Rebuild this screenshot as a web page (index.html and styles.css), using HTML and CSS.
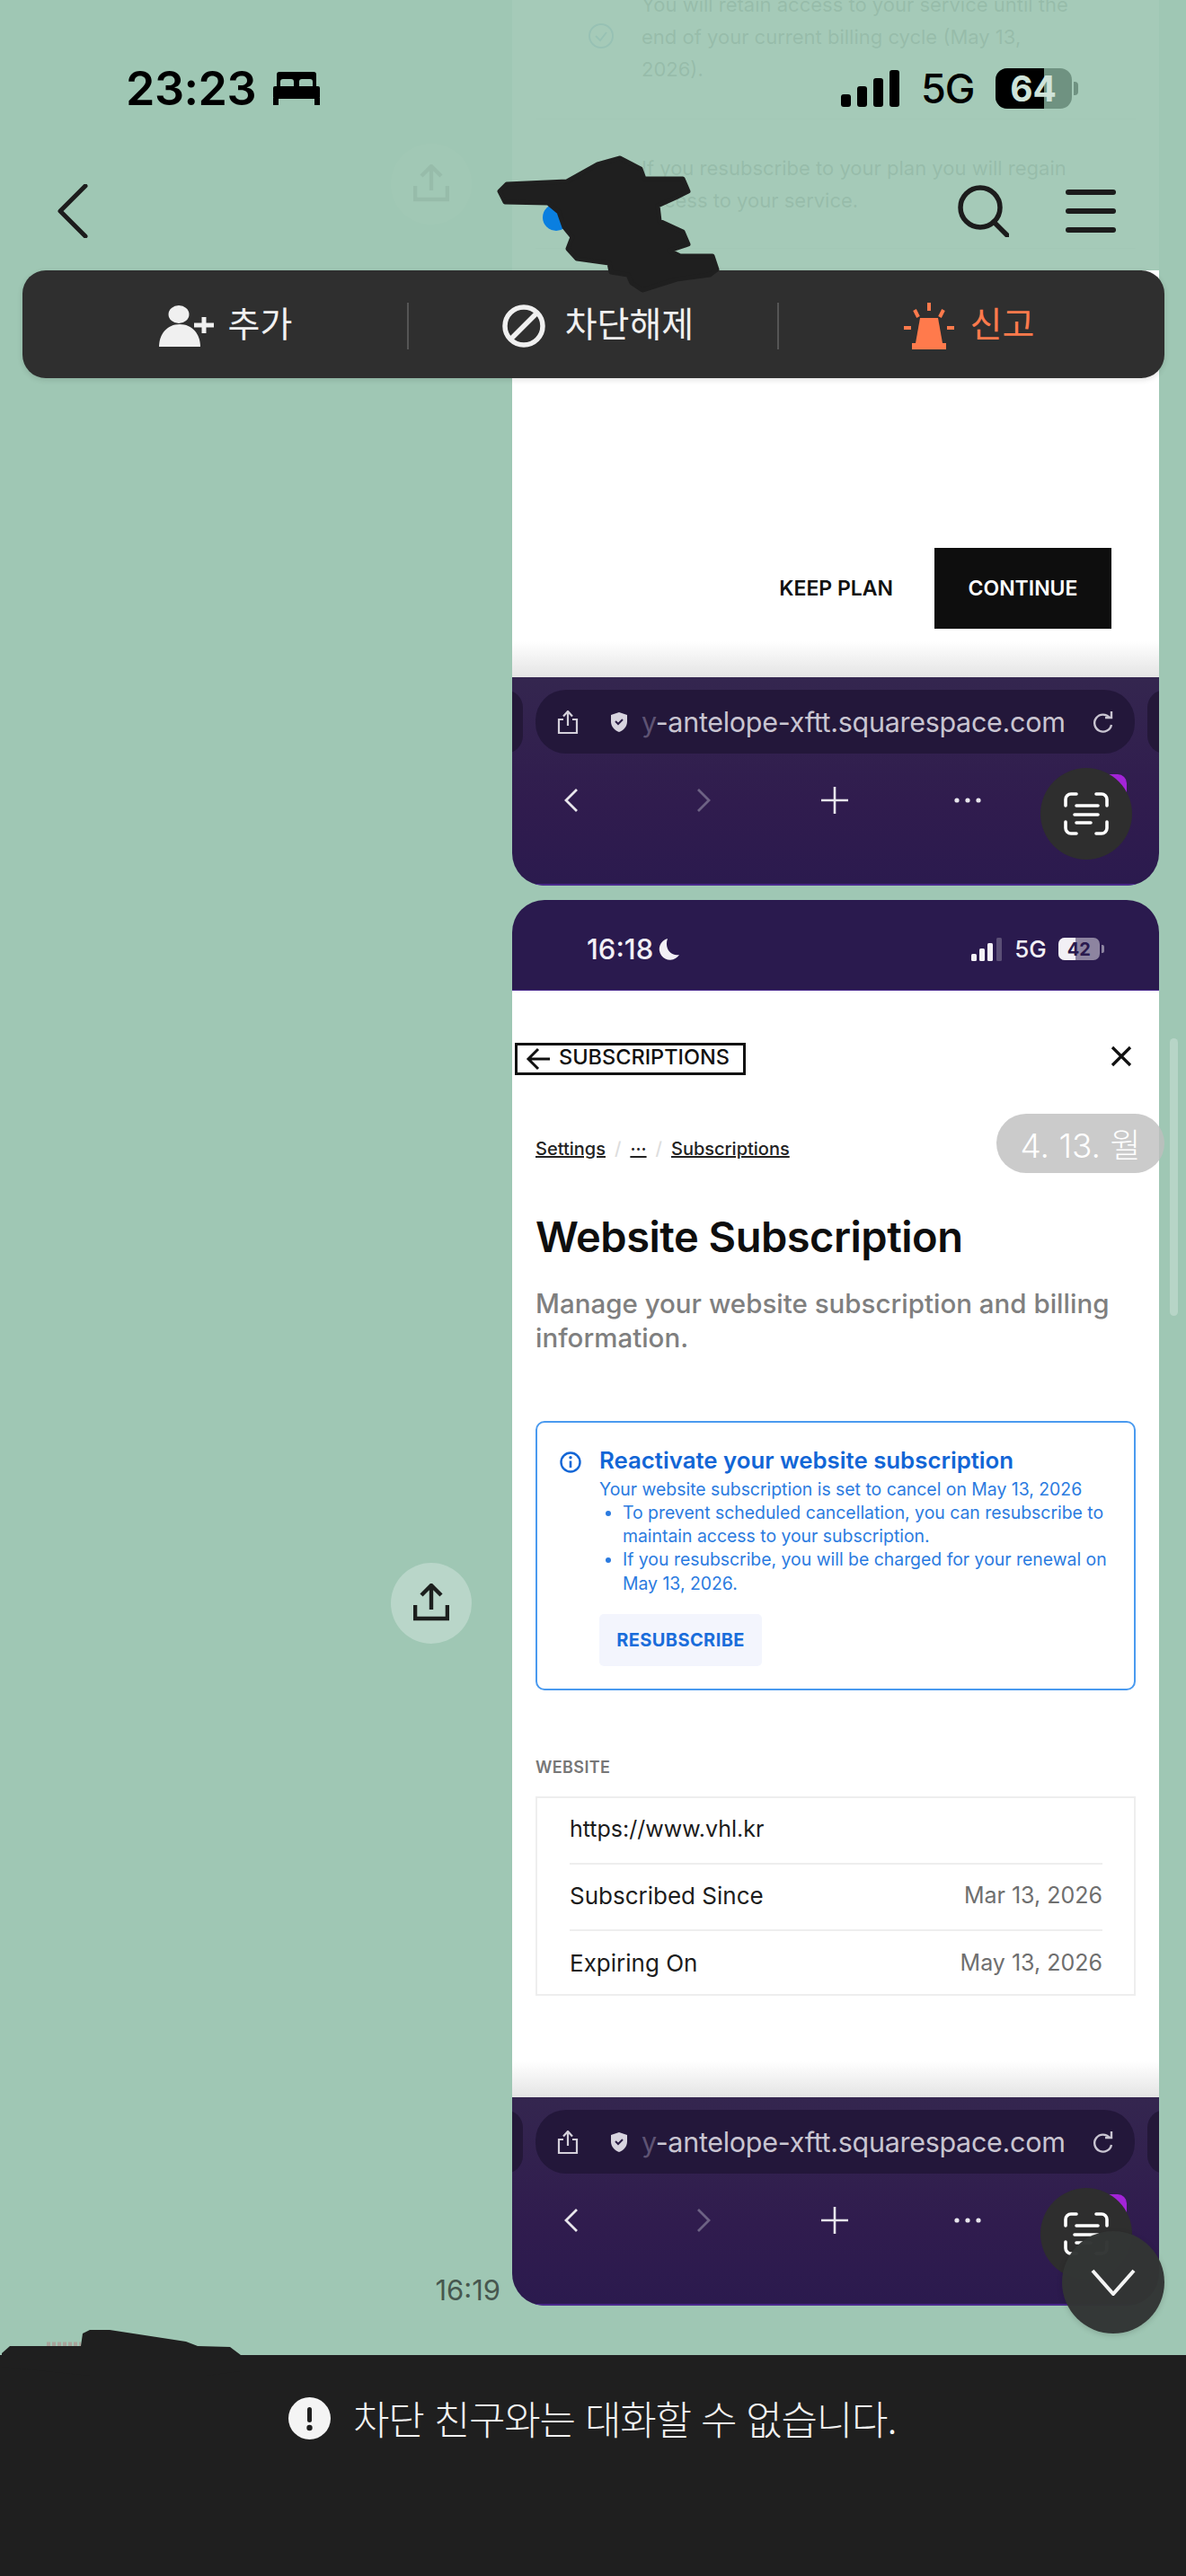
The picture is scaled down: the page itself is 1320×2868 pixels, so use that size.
FILE: index.html
```html
<!DOCTYPE html>
<html lang="ko">
<head>
    <meta charset="UTF-8">
    <meta name="viewport" content="width=device-width, initial-scale=1.0">
    <title>Chat</title>
    <link rel="stylesheet" href="styles.css">
</head>
<body>
    <!-- shared toolbar icons -->
    <svg class="icon-defs" aria-hidden="true">
        <symbol id="i-up" viewBox="0 0 24 26"><path d="M12 17V2M7 6.5L12 1l5 5.5M7 10H2v15h20V10h-5" fill="none" stroke="#d4d0da" stroke-width="2.2"/></symbol>
        <symbol id="i-shield" viewBox="0 0 20 22"><path d="M10 0l9 3v7c0 6-4 10-9 12C5 20 1 16 1 10V3z" fill="#d8d4df"/><path d="M6 10l3 3 5-5" fill="none" stroke="#2a1c44" stroke-width="2"/></symbol>
        <symbol id="i-reload" viewBox="0 0 24 26"><path d="M20 8a9.5 9.5 0 1 0 2 8" fill="none" stroke="#c9c5d1" stroke-width="2.4"/><path d="M15 8h7V1" fill="none" stroke="#c9c5d1" stroke-width="2.4"/></symbol>
        <symbol id="i-scan" viewBox="0 0 50 48"><path d="M2 15V8a6 6 0 0 1 6-6h6M36 2h6a6 6 0 0 1 6 6v7M2 33v7a6 6 0 0 0 6 6h6M36 46h6a6 6 0 0 0 6-6v-7M14 15h24M12 25h26M14 34h16" fill="none" stroke="#fff" stroke-width="3.6" stroke-linecap="round"/></symbol>
        <symbol id="i-share" viewBox="0 0 40 44"><path d="M20 29V4M9 13L20 2l11 11" fill="none" stroke="#1c1f1d" stroke-width="4.4"/><path d="M2 24v15h36V24" fill="none" stroke="#1c1f1d" stroke-width="4.6"/></symbol>
    </svg>

    <!-- transcript -->
    <main class="chat">
        <div class="transcript">
            <div class="msg">
                <div class="msg-side">
                    <button class="share-btn"><svg width="40" height="44"><use href="#i-share"/></svg></button>
                </div>
                <div class="shot">
                    <div class="page page-plan">
                        <div class="plan-note">
                            <svg class="plan-check" width="28" height="30" viewBox="0 0 28 30"><circle cx="14" cy="15" r="13" fill="none" stroke="#1b6fb0" stroke-width="2"/><path d="M8 15l5 5 7-9" fill="none" stroke="#1b6fb0" stroke-width="2"/></svg>
                            <p>You will retain access to your service until the end of your current billing cycle (May 13, 2026).</p>
                        </div>
                        <div class="plan-note plan-note-b">
                            <p>If you resubscribe to your plan you will regain access to your service.</p>
                        </div>
                        <div class="plan-actions">
                            <span class="keep-plan">KEEP PLAN</span>
                            <span class="continue">CONTINUE</span>
                        </div>
                    </div>
                    <div class="browser-bar">
                        <span class="tab-peek tab-peek-l"></span>
                        <span class="tab-peek tab-peek-r"></span>
                        <div class="url-pill">
                            <svg class="url-up" width="24" height="26"><use href="#i-up"/></svg>
                            <svg class="url-shield" width="20" height="22"><use href="#i-shield"/></svg>
                            <span class="url-text"><span class="url-fade">y</span>-antelope-xftt.squarespace.com</span>
                            <svg class="url-reload" width="24" height="26"><use href="#i-reload"/></svg>
                        </div>
                        <div class="browser-nav">
                            <svg width="24" height="34" viewBox="0 0 24 34"><path d="M19 5L7 17l12 12" fill="none" stroke="#e8e6ec" stroke-width="2.8"/></svg>
                            <svg class="nav-off" width="24" height="34" viewBox="0 0 24 34"><path d="M5 5l12 12L5 29" fill="none" stroke="#6d6284" stroke-width="2.8"/></svg>
                            <svg width="30" height="30" viewBox="0 0 30 30"><path d="M15 0v30M0 15h30" stroke="#e8e6ec" stroke-width="2.6"/></svg>
                            <svg width="30" height="6" viewBox="0 0 30 6"><circle cx="3" cy="3" r="2.6" fill="#e8e6ec"/><circle cx="15" cy="3" r="2.6" fill="#e8e6ec"/><circle cx="27" cy="3" r="2.6" fill="#e8e6ec"/></svg>
                        </div>
                        <span class="tab-badge"></span>
                        <button class="scan-btn"><svg width="50" height="48"><use href="#i-scan"/></svg></button>
                    </div>
                </div>
            </div>

            <div class="msg">
                <div class="msg-side">
                    <button class="share-btn"><svg width="40" height="44"><use href="#i-share"/></svg></button>
                    <span class="msg-time">16:19</span>
                </div>
                <div class="shot">
                    <div class="shot-status">
                        <span class="shot-clock">16:18</span>
                        <svg class="shot-moon" width="24" height="26" viewBox="0 0 24 26"><path d="M10 1a12 12 0 1 0 13 18C14 21 6 12 10 1z" fill="#f2f0f5"/></svg>
                        <svg class="shot-signal" width="34" height="26" viewBox="0 0 34 26"><rect x="0" y="18" width="6" height="8" rx="1.5" fill="#f2f0f5"/><rect x="9" y="12" width="6" height="14" rx="1.5" fill="#f2f0f5"/><rect x="18" y="6" width="6" height="20" rx="1.5" fill="#f2f0f5"/><rect x="28" y="0" width="6" height="26" rx="1.5" fill="#5b4f76"/></svg>
                        <span class="shot-net">5G</span>
                        <span class="shot-batt"><span class="shot-batt-fill"></span><b>42</b></span>
                        <span class="shot-nub"></span>
                    </div>
                    <div class="page page-sub">
                        <div class="sub-top">
                            <span class="sub-back">
                                <svg width="28" height="26" viewBox="0 0 28 26"><path d="M27 13H3M14 2L3 13l11 11" fill="none" stroke="#111" stroke-width="3"/></svg>
                                <span class="sub-back-text">SUBSCRIPTIONS</span>
                            </span>
                            <svg class="sub-close" width="24" height="24" viewBox="0 0 24 24"><path d="M2 2l20 20M22 2L2 22" stroke="#111" stroke-width="3.2"/></svg>
                        </div>
                        <div class="crumbs">
                            <a>Settings</a><i>/</i><a>···</a><i>/</i><a>Subscriptions</a>
                        </div>
                        <h1 class="sub-title">Website Subscription</h1>
                        <p class="sub-lead">Manage your website subscription and billing information.</p>

                        <div class="notice">
                            <svg class="notice-icon" width="24" height="24" viewBox="0 0 24 24"><circle cx="12" cy="12" r="10.5" fill="none" stroke="#1266d6" stroke-width="2.4"/><path d="M12 10.5V18" stroke="#1266d6" stroke-width="2.6"/><circle cx="12" cy="6.8" r="1.7" fill="#1266d6"/></svg>
                            <div class="notice-body">
                                <h2>Reactivate your website subscription</h2>
                                <p>Your website subscription is set to cancel on May 13, 2026</p>
                                <ul>
                                    <li>To prevent scheduled cancellation, you can resubscribe to maintain access to your subscription.</li>
                                    <li>If you resubscribe, you will be charged for your renewal on May 13, 2026.</li>
                                </ul>
                                <span class="resub">RESUBSCRIBE</span>
                            </div>
                        </div>

                        <div class="section-label">WEBSITE</div>
                        <div class="site-table">
                            <div class="site-row"><span class="site-url">https://www.vhl.kr</span></div>
                            <div class="site-row"><span>Subscribed Since</span><em>Mar 13, 2026</em></div>
                            <div class="site-row"><span>Expiring On</span><em>May 13, 2026</em></div>
                        </div>
                    </div>
                    <div class="browser-bar">
                        <span class="tab-peek tab-peek-l"></span>
                        <span class="tab-peek tab-peek-r"></span>
                        <div class="url-pill">
                            <svg class="url-up" width="24" height="26"><use href="#i-up"/></svg>
                            <svg class="url-shield" width="20" height="22"><use href="#i-shield"/></svg>
                            <span class="url-text"><span class="url-fade">y</span>-antelope-xftt.squarespace.com</span>
                            <svg class="url-reload" width="24" height="26"><use href="#i-reload"/></svg>
                        </div>
                        <div class="browser-nav">
                            <svg width="24" height="34" viewBox="0 0 24 34"><path d="M19 5L7 17l12 12" fill="none" stroke="#e8e6ec" stroke-width="2.8"/></svg>
                            <svg class="nav-off" width="24" height="34" viewBox="0 0 24 34"><path d="M5 5l12 12L5 29" fill="none" stroke="#6d6284" stroke-width="2.8"/></svg>
                            <svg width="30" height="30" viewBox="0 0 30 30"><path d="M15 0v30M0 15h30" stroke="#e8e6ec" stroke-width="2.6"/></svg>
                            <svg width="30" height="6" viewBox="0 0 30 6"><circle cx="3" cy="3" r="2.6" fill="#e8e6ec"/><circle cx="15" cy="3" r="2.6" fill="#e8e6ec"/><circle cx="27" cy="3" r="2.6" fill="#e8e6ec"/></svg>
                        </div>
                        <span class="tab-badge"></span>
                        <button class="scan-btn"><svg width="50" height="48"><use href="#i-scan"/></svg></button>
                    </div>
                </div>
            </div>
        </div>

        <!-- floating bits over the transcript -->
        <span class="date-pill">4. 13. 월</span>
        <span class="scroll-thumb"></span>
        <button class="down-btn">
            <svg width="50" height="30" viewBox="0 0 50 30"><path d="M2 2l23 26L48 2" fill="none" stroke="#f4f4f4" stroke-width="4"/></svg>
        </button>
    </main>

    <!-- blocked friend footer -->
    <footer class="blocked">
        <svg width="47" height="47" viewBox="0 0 47 47"><circle cx="23.5" cy="23.5" r="23.5" fill="#f4f4f4"/><rect x="21" y="11" width="5" height="17" rx="2.5" fill="#1f1f1f"/><circle cx="23.5" cy="34" r="3.2" fill="#1f1f1f"/></svg>
        <span>차단 친구와는 대화할 수 없습니다.</span>
    </footer>

    <!-- header over the transcript -->
    <header class="top">
        <div class="top-head">
            <div class="status">
                <span class="status-time">23:23</span>
                <svg class="status-bed" width="52" height="37" viewBox="0 0 52 37"><path d="M4 3a3 3 0 0 1 3-3h38a3 3 0 0 1 3 3v13h-4v-5a3 3 0 0 0-3-3H32a3 3 0 0 0-3 3v5h-6v-5a3 3 0 0 0-3-3H11a3 3 0 0 0-3 3v5H4z" fill="#000"/><rect x="0" y="16" width="52" height="14" rx="2" fill="#000"/><rect x="0" y="29" width="6" height="8" fill="#000"/><rect x="46" y="29" width="6" height="8" fill="#000"/></svg>
                <svg class="status-signal" width="65" height="41" viewBox="0 0 65 41"><rect x="0" y="27" width="11" height="14" rx="3" fill="#000"/><rect x="18" y="18" width="11" height="23" rx="3" fill="#000"/><rect x="36" y="9" width="11" height="32" rx="3" fill="#000"/><rect x="54" y="0" width="11" height="41" rx="3" fill="#000"/></svg>
                <span class="status-net">5G</span>
                <span class="status-batt"><span class="status-batt-fill"></span><b>64</b></span>
                <span class="status-nub"></span>
            </div>
            <nav class="nav">
                <svg class="nav-back" width="34" height="60" viewBox="0 0 34 60"><path d="M31 2L3 30l28 28" fill="none" stroke="#1c1c1c" stroke-width="5" stroke-linecap="round" stroke-linejoin="round"/></svg>
                <svg class="nav-search" width="58" height="58" viewBox="0 0 58 58"><circle cx="26" cy="25" r="22" fill="none" stroke="#1c1c1c" stroke-width="5.5"/><path d="M41 41l15 15" stroke="#1c1c1c" stroke-width="5.5" stroke-linecap="round"/></svg>
                <div class="nav-menu"><span></span><span></span><span></span></div>
            </nav>
        </div>
        <div class="action-bar">
            <div class="action action-add">
                <svg width="62" height="46" viewBox="0 0 62 46"><ellipse cx="22" cy="10" rx="11.5" ry="10" fill="#f0f0f0"/><path d="M0 46C0 32 9 21 23 21s23 11 23 25z" fill="#f0f0f0"/><path d="M50 13v18M39 22h22" stroke="#f0f0f0" stroke-width="5"/></svg>
                <span>추가</span>
            </div>
            <div class="action action-unblock">
                <svg width="48" height="48" viewBox="0 0 48 48"><circle cx="24" cy="24" r="21" fill="none" stroke="#f0f0f0" stroke-width="5.5"/><path d="M38 10L10 38" stroke="#f0f0f0" stroke-width="5.5"/></svg>
                <span>차단해제</span>
            </div>
            <div class="action action-report">
                <svg width="56" height="52" viewBox="0 0 56 52"><path d="M18 17h20l5 28H13z" fill="#ff7a4c"/><rect x="9" y="45" width="38" height="7" fill="#ff7a4c"/><path d="M28 0v9M12 8l4 8M44 8l-4 8M0 28h8M48 28h8" stroke="#ff7a4c" stroke-width="4"/></svg>
                <span>신고</span>
            </div>
        </div>
    </header>

    <!-- scribbled out names -->
    <svg class="scribble scribble-top" width="300" height="170" viewBox="540 165 300 170">
        <circle cx="619" cy="242" r="15" fill="#0a7fe0"/>
        <path d="M631 202L665 183 690 176 713 188 717 199 760 199 766 213 752 220 732 229 734 246 760 258 766 272 745 279 757 285 793 285 798 300 790 306 753 311 715 323 703 315 699 306 680 303 678 293 642 288 632 277 637 264 628 253 622 236 610 226 562 225 556 213 564 205z" fill="#1f1f1f" stroke="#1f1f1f" stroke-width="5" stroke-linejoin="round"/>
    </svg>
    <svg class="scribble scribble-bottom" width="280" height="60" viewBox="0 2590 280 60">
        <path d="M52 2610h38" stroke="#a9a39b" stroke-width="5" stroke-dasharray="4 2"/>
        <path d="M2 2620L11 2612 90 2612 92 2598 100 2594 122 2594 207 2607 220 2612 256 2613 268 2622 268 2640 230 2645 100 2645 2 2635z" fill="#1f1f1f"/>
    </svg>
</body>
</html>
```

FILE: styles.css
```css
* {
    box-sizing: border-box;
}

body {
    margin: 0;
    width: 1320px;
    height: 2868px;
    position: relative;
    display: flex;
    flex-direction: column;
    overflow: hidden;
    background-color: #9fc7b4;
    font-family: Inter, "Noto Sans CJK KR", sans-serif;
}

button {
    border: none;
    padding: 0;
    display: flex;
    align-items: center;
    justify-content: center;
}

p, h1, h2, ul {
    margin: 0;
    padding: 0;
}

.icon-defs {
    display: none;
}

/* transcript */
.chat {
    flex: 1;
    position: relative;
    overflow: hidden;
}

.transcript {
    margin-top: -576px;
    padding-right: 30px;
    display: flex;
    flex-direction: column;
    align-items: flex-end;
    gap: 16px;
}

.msg {
    display: flex;
}

.msg-side {
    width: 135px;
    display: grid;
    grid-template-rows: 1fr auto 1fr;
}

.share-btn {
    grid-row: 2;
    width: 90px;
    height: 90px;
    border-radius: 50%;
    background-color: #b9d6c9;
}

.msg-time {
    grid-row: 3;
    align-self: end;
    justify-self: end;
    margin-right: 13px;
    font-size: 31px;
    line-height: 34px;
    color: #47574f;
}

.shot {
    width: 720px;
    position: relative;
    border-radius: 36px;
    overflow: hidden;
}

.page {
    background: linear-gradient(to bottom, #fff calc(100% - 40px), #e4e4e4);
}

/* first screenshot, the plan dialog */
.page-plan {
    height: 1330px;
    padding-top: 563px;
    display: flex;
    flex-direction: column;
}

.plan-note {
    position: relative;
    height: 146px;
    margin: 0 26px;
    padding: 0 60px 0 118px;
    border-bottom: 1px solid #d0d0d0;
    font-size: 22px;
    line-height: 36px;
    color: #111;
}

.plan-check {
    position: absolute;
    left: 59px;
    top: 38px;
}

.plan-note-b {
    padding-top: 36px;
    height: 144px;
}

.plan-actions {
    margin-top: auto;
    padding: 0 53px 54px 0;
    display: flex;
    justify-content: flex-end;
    align-items: center;
    gap: 46px;
    font-size: 23px;
    font-weight: 600;
}

.keep-plan {
    color: #111;
}

.continue {
    width: 197px;
    height: 90px;
    display: flex;
    align-items: center;
    justify-content: center;
    background-color: #0e0e0e;
    color: #fff;
}

/* browser toolbar at the foot of each screenshot */
.browser-bar {
    height: 232px;
    position: relative;
    padding-top: 14px;
    background: linear-gradient(to bottom, #34264f, #301c4e 60%, #2b1a4e);
    box-shadow: inset 0 -2px 0 #4a2a8c;
}

.tab-peek {
    position: absolute;
    top: 14px;
    width: 40px;
    height: 71px;
    border-radius: 30px;
    background-color: #241839;
}

.tab-peek-l {
    left: -28px;
}

.tab-peek-r {
    right: -27px;
}

.url-pill {
    margin: 0 27px 0 26px;
    height: 71px;
    display: flex;
    align-items: center;
    padding-left: 24px;
    border-radius: 34px;
    background-color: #23173a;
}

.url-shield {
    margin-left: 35px;
}

.url-text {
    margin-left: 15px;
    font-size: 30.5px;
    letter-spacing: -0.3px;
    color: #c9c5d1;
    white-space: nowrap;
}

.url-fade {
    color: #5e5373;
}

.url-reload {
    margin-left: auto;
    margin-right: 24px;
}

.browser-nav {
    margin-top: 35px;
    padding-left: 53px;
    display: flex;
    align-items: center;
    gap: 118px;
    height: 34px;
}

.nav-off {
    margin-left: 7px;
}

.tab-badge {
    position: absolute;
    top: 108px;
    right: 36px;
    width: 40px;
    height: 40px;
    border-radius: 10px;
    background-color: #a324d8;
}

.scan-btn {
    position: absolute;
    top: 101px;
    right: 30px;
    width: 102px;
    height: 102px;
    border-radius: 50%;
    background-color: #2e2e2e;
}

/* second screenshot, phone status strip */
.shot-status {
    height: 101px;
    display: flex;
    align-items: center;
    padding: 8px 0 0 83px;
    background-color: #2a1a4e;
    box-shadow: inset 0 -1px 0 #4a2a8c;
    color: #f2f0f5;
}

.shot-clock {
    font-size: 31px;
    font-weight: 500;
}

.shot-moon {
    margin-left: 6px;
}

.shot-signal {
    margin-left: 324px;
}

.shot-net {
    margin-left: 14px;
    font-size: 26px;
    font-weight: 500;
}

.shot-batt {
    margin-left: 13px;
    width: 46px;
    height: 25px;
    border-radius: 7px;
    position: relative;
    overflow: hidden;
    display: flex;
    align-items: center;
    justify-content: center;
    background-color: #8d84a0;
    font-size: 20px;
    color: #2a1a4e;
}

.shot-batt b {
    position: relative;
}

.shot-batt-fill {
    position: absolute;
    left: 0;
    top: 0;
    bottom: 0;
    width: 42%;
    background-color: #f2f0f5;
}

.shot-nub {
    margin-left: 2px;
    width: 3px;
    height: 9px;
    border-radius: 0 2px 2px 0;
    background-color: #8d84a0;
}

/* second screenshot, subscription page */
.page-sub {
    height: 1232px;
    padding: 58px 26px 0;
}

.sub-top {
    margin: 0 4px 0 -23px;
    display: flex;
    align-items: center;
    justify-content: space-between;
}

.sub-back {
    width: 257px;
    height: 36px;
    display: flex;
    align-items: center;
    gap: 9px;
    padding-left: 9px;
    border: 3px solid #111;
}

.sub-back-text {
    margin-bottom: 6px;
    font-size: 23.5px;
    font-weight: 500;
    color: #111;
}

.sub-close {
    margin-bottom: 6px;
}

.crumbs {
    margin-top: 68px;
    display: flex;
    align-items: center;
    height: 28px;
    font-size: 20px;
    font-weight: 500;
    color: #222;
}

.crumbs a {
    text-decoration: underline;
}

.crumbs i {
    margin: 0 10px;
    font-style: normal;
    color: #ddd;
}

.sub-title {
    margin-top: 56px;
    font-size: 47px;
    line-height: 56px;
    font-weight: 600;
    letter-spacing: -0.5px;
    color: #0e0e0e;
}

.sub-lead {
    margin-top: 27px;
    font-size: 29.5px;
    line-height: 38px;
    font-weight: 500;
    color: #7f7f7f;
}

.notice {
    margin-top: 74px;
    height: 300px;
    display: flex;
    gap: 20px;
    padding: 25px 20px 0 25px;
    border: 2.5px solid #4a9aef;
    border-radius: 10px;
}

.notice-icon {
    margin-top: 7px;
    flex-shrink: 0;
}

.notice-body h2 {
    font-size: 25.8px;
    line-height: 34px;
    font-weight: 600;
    color: #1266d6;
}

.notice-body p {
    margin-top: 2px;
    font-size: 19.4px;
    line-height: 26px;
    color: #2b7be0;
}

.notice-body ul {
    padding-left: 26px;
    font-size: 19.4px;
    line-height: 26.2px;
    color: #2b7be0;
}

.resub {
    margin-top: 21px;
    width: 181px;
    height: 58px;
    display: flex;
    align-items: center;
    justify-content: center;
    border-radius: 5px;
    background-color: #f3f5fd;
    font-size: 20px;
    font-weight: 700;
    letter-spacing: 0.4px;
    color: #1a6ddb;
}

.section-label {
    margin-top: 74px;
    font-size: 18px;
    line-height: 24px;
    font-weight: 600;
    letter-spacing: 0.4px;
    color: #777;
}

.site-table {
    margin-top: 20px;
    padding: 0 35px 0 36px;
    height: 222px;
    border: 2px solid #eee;
}

.site-row {
    height: 74px;
    padding-bottom: 4px;
    display: flex;
    align-items: center;
    justify-content: space-between;
    border-bottom: 2px solid #eee;
    font-size: 26px;
    color: #1c1c1c;
}

.site-row:last-child {
    border-bottom: none;
}

.site-url {
    font-size: 25px;
}

.site-row em {
    font-style: normal;
    font-size: 25px;
    color: #6f6f6f;
}

/* floating bits */
.date-pill {
    position: absolute;
    top: 1240px;
    left: 1109px;
    width: 187px;
    height: 66px;
    border-radius: 33px;
    display: flex;
    align-items: center;
    justify-content: center;
    background-color: rgba(190, 190, 190, 0.8);
    font-size: 37px;
    font-weight: 300;
    color: #fff;
}

.scroll-thumb {
    position: absolute;
    top: 1156px;
    left: 1302px;
    width: 9px;
    height: 309px;
    border-radius: 5px;
    background-color: rgba(255, 255, 255, 0.25);
}

.down-btn {
    position: absolute;
    top: 2484px;
    left: 1182px;
    width: 114px;
    height: 114px;
    border-radius: 50%;
    background-color: rgba(50, 53, 52, 0.98);
    box-shadow: 0 2px 6px rgba(0, 0, 0, 0.15);
}

/* footer */
.blocked {
    height: 246px;
    padding: 47px 0 0 321px;
    display: flex;
    align-items: flex-start;
    gap: 25px;
    background-color: #1f1f1f;
    color: #f2f2f2;
    font-family: "Noto Sans CJK KR", sans-serif;
    font-size: 44px;
    font-weight: 300;
    line-height: 47px;
    letter-spacing: -1.2px;
}

/* header */
.top {
    position: absolute;
    top: 0;
    left: 0;
    width: 100%;
}

.top-head {
    height: 301px;
    padding-top: 70px;
    background-color: rgba(159, 199, 180, 0.94);
}

.status {
    height: 56px;
    padding-left: 140px;
    display: flex;
    align-items: center;
    color: #000;
}

.status-time {
    font-size: 52px;
    font-weight: 600;
    letter-spacing: -0.5px;
}

.status-bed {
    margin-left: 19px;
}

.status-signal {
    margin-left: 580px;
}

.status-net {
    margin-left: 24px;
    font-size: 45px;
    font-weight: 500;
    letter-spacing: -1px;
}

.status-batt {
    margin-left: 23px;
    width: 85px;
    height: 45px;
    position: relative;
    overflow: hidden;
    border-radius: 13px;
    display: flex;
    align-items: center;
    justify-content: center;
    background-color: #6f9281;
    font-size: 39px;
    color: #cfe3d9;
}

.status-batt b {
    position: relative;
    font-weight: 700;
}

.status-batt-fill {
    position: absolute;
    left: 0;
    top: 0;
    bottom: 0;
    width: 64%;
    background-color: #000;
}

.status-nub {
    margin-left: 2px;
    width: 5px;
    height: 15px;
    border-radius: 0 4px 4px 0;
    background-color: #6f9281;
}

.nav {
    margin-top: 79px;
    height: 60px;
    padding: 0 78px 0 64px;
    display: flex;
    align-items: center;
}

.nav-search {
    margin-left: auto;
}

.nav-menu {
    margin-left: 63px;
    width: 56px;
    height: 48px;
    display: flex;
    flex-direction: column;
    justify-content: space-between;
}

.nav-menu span {
    height: 6px;
    border-radius: 3px;
    background-color: #1c1c1c;
}

.action-bar {
    margin: 0 24px 0 25px;
    height: 120px;
    border-radius: 26px;
    display: grid;
    grid-template-columns: 430px 412px 1fr;
    grid-template-rows: 1fr;
    background-color: #2f2f2f;
    box-shadow: 0 2px 6px rgba(0, 0, 0, 0.12);
}

.action {
    margin: 36px 0;
    display: flex;
    align-items: center;
    justify-content: center;
    gap: 15px;
    border-right: 2px solid #555;
    font-family: "Noto Sans CJK KR", sans-serif;
    font-size: 39px;
    line-height: 1;
    color: #f0f0f0;
}

.action span {
    margin-bottom: 10px;
}

.action-add {
    padding-left: 24px;
}

.action-unblock {
    gap: 22px;
    padding-left: 11px;
}

.action-report {
    gap: 18px;
    padding-right: 6px;
    border-right: none;
    color: #ff7a4c;
}

/* marker scribbles */
.scribble {
    position: absolute;
}

.scribble-top {
    left: 540px;
    top: 165px;
}

.scribble-bottom {
    left: 0;
    top: 2590px;
}
```
